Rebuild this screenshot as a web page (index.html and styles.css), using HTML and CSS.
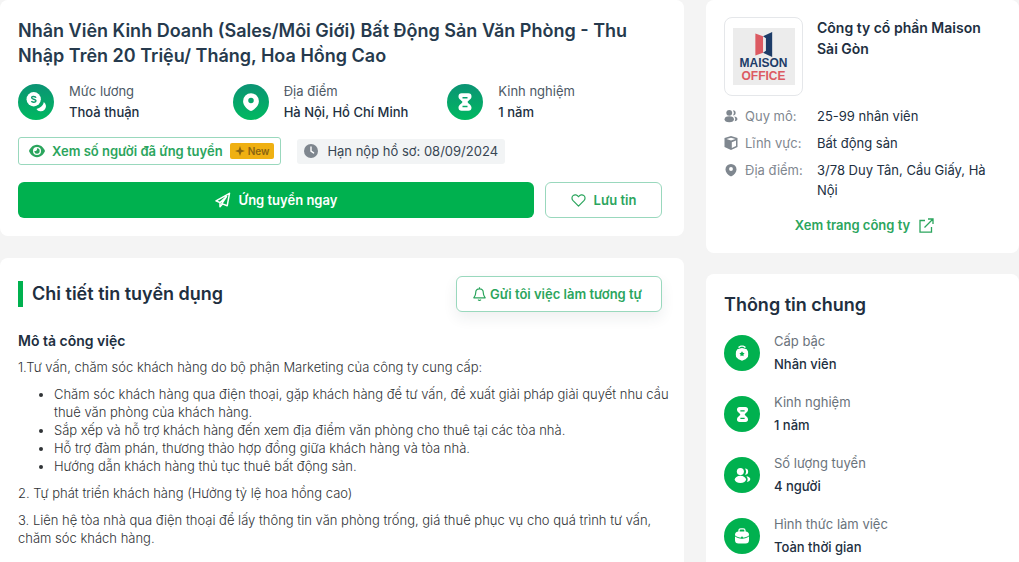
FILE: index.html
```html
<!DOCTYPE html>
<html lang="vi">
<head>
    <meta charset="UTF-8">
    <meta name="viewport" content="width=device-width, initial-scale=1.0">
    <title>Nhân Viên Kinh Doanh - Tuyển dụng</title>
    <link rel="stylesheet" href="styles.css">
</head>
<body>
    <!-- shared icons -->
    <svg class="sprite" aria-hidden="true">
        <symbol id="icon-hourglass" viewBox="0 0 24 24">
            <path fill-rule="evenodd" d="M8 1.500h8a3.800 3.800 0 0 1 3.800 3.800c0 3.200-3.300 4.200-4.800 6.700 1.500 2.500 4.800 3.500 4.800 6.700a3.800 3.800 0 0 1-3.800 3.800H8a3.800 3.800 0 0 1-3.800-3.800c0-3.200 3.300-4.200 4.800-6.700-1.500-2.500-4.800-3.500-4.800-6.700A3.800 3.800 0 0 1 8 1.500zM9 6v1.700h6V6zM9 16.500v1.700h6v-1.700z"/>
        </symbol>
        <symbol id="icon-pin" viewBox="0 0 24 24">
            <path fill-rule="evenodd" d="M12 1.500a9.500 9.500 0 0 0-9.500 9.500c0 5 4.500 9 7.800 11.200a3 3 0 0 0 3.400 0c3.300-2.200 7.800-6.200 7.800-11.200A9.500 9.500 0 0 0 12 1.500zm0 5.500a3.300 3.300 0 1 1 0 6.600A3.300 3.300 0 0 1 12 7z"/>
        </symbol>
        <symbol id="icon-users" viewBox="0 0 24 24">
            <circle cx="9" cy="6.500" r="5"/>
            <ellipse cx="9" cy="17.500" rx="8" ry="5"/>
            <path d="M15.500 2a4.500 4.500 0 0 1 0 9 8 8 0 0 0 0-9zM17.500 13c3 .3 5.500 1.800 5.500 4s-2 3.700-4.800 4c1.700-2.500 1.500-5.500-.7-8z"/>
        </symbol>
    </svg>

    <main class="page">
        <div class="column">
            <section class="card job">
                <h1>Nhân Viên Kinh Doanh (Sales/Môi Giới) Bất Động Sản Văn Phòng - Thu Nhập Trên 20 Triệu/ Tháng, Hoa Hồng Cao</h1>
                <div class="job-info">
                    <div class="info-item">
                        <span class="circle gradient">
                            <svg width="22" height="22" viewBox="0 0 24 24" fill="#fff">
                                <circle cx="9.500" cy="9" r="7.800"/>
                                <path d="M20.500 12a5.600 5.600 0 1 1-8 7.500c4-.9 7.500-3.500 8-7.500z"/>
                                <path d="M12 7.300C11.300 5.500 7.300 5.300 7.300 7.400c0 2.200 4.700 1 4.700 3.300 0 2-4.200 2-5 .4" fill="none" stroke="#0a9b6c" stroke-width="1.600"/>
                            </svg>
                        </span>
                        <div>
                            <div class="info-label">Mức lương</div>
                            <div class="info-value">Thoả thuận</div>
                        </div>
                    </div>
                    <div class="info-item">
                        <span class="circle gradient"><svg width="20" height="20" fill="#fff"><use href="#icon-pin"/></svg></span>
                        <div>
                            <div class="info-label">Địa điểm</div>
                            <div class="info-value">Hà Nội, Hồ Chí Minh</div>
                        </div>
                    </div>
                    <div class="info-item">
                        <span class="circle gradient"><svg width="20" height="20" fill="#fff"><use href="#icon-hourglass"/></svg></span>
                        <div>
                            <div class="info-label">Kinh nghiệm</div>
                            <div class="info-value">1 năm</div>
                        </div>
                    </div>
                </div>
                <div class="job-meta">
                    <button class="btn-outline btn-view" type="button">
                        <svg width="16" height="16" viewBox="0 0 576 512" fill="currentColor"><path fill-rule="evenodd" d="M288 32c-81 0-146 37-193 80C48 156 17 208 3 244c-3 8-3 17 0 24 14 36 45 88 92 132 47 43 112 80 193 80s146-37 193-80c47-44 78-96 92-132 3-7 3-16 0-24-14-36-45-88-92-132-47-43-112-80-193-80zM144 256a144 144 0 1 1 288 0 144 144 0 1 1-288 0zm144-64c0 35-29 64-64 64-7 0-14-1-20-3-6-2-13 2-12 8a96 96 0 1 0 101-101c-6 0-10 6-8 12 2 6 3 13 3 20z"/></svg>
                        <span>Xem số người đã ứng tuyển</span>
                        <span class="badge-new"><svg width="10" height="10" viewBox="0 0 10 10" fill="currentColor"><path d="M5 0l1.300 3.700L10 5 6.300 6.300 5 10 3.700 6.300 0 5l3.700-1.300z"/></svg>New</span>
                    </button>
                    <div class="deadline">
                        <svg width="14" height="14" viewBox="0 0 14 14"><circle cx="7" cy="7" r="7" fill="#7f878f"/><path d="M7 3v4.200l2.600 1.700" fill="none" stroke="#fff" stroke-width="1.400" stroke-linecap="round"/></svg>
                        <span>Hạn nộp hồ sơ: 08/09/2024</span>
                    </div>
                </div>
                <div class="job-actions">
                    <button class="btn-apply" type="button">
                        <svg width="16" height="16" viewBox="0 0 16 16" fill="none" stroke="currentColor" stroke-width="1.500" stroke-linejoin="round"><path d="M14.500 1.300L1 8.800l4 1.800 6.500-6-4.700 7 5.400 2.200zM5 10.600v4.200l2.500-2.700"/></svg>
                        Ứng tuyển ngay
                    </button>
                    <button class="btn-outline btn-save" type="button">
                        <svg width="15" height="15" viewBox="0 0 16 16" fill="none" stroke="currentColor" stroke-width="1.300" stroke-linejoin="round"><path d="M8 14L2.200 8.200C.6 6.500.7 4 2.200 2.800 4 1.300 6.400 1.800 8 4c1.600-2.200 4-2.700 5.800-1.200 1.500 1.200 1.600 3.700 0 5.400z"/></svg>
                        Lưu tin
                    </button>
                </div>
            </section>

            <section class="card card-last detail">
                <div class="detail-header">
                    <h2 class="marked">Chi tiết tin tuyển dụng</h2>
                    <button class="btn-outline btn-alert" type="button">
                        <svg width="13" height="14" viewBox="0 0 13 14" fill="none" stroke="currentColor" stroke-width="1.200" stroke-linejoin="round"><path d="M6.500 1.800c-2.500 0-3.800 1.800-3.800 3.900 0 2.800-.8 3.600-1.900 5.100h11.400c-1.100-1.500-1.900-2.300-1.900-5.100 0-2.100-1.300-3.900-3.800-3.900zM6.500.3v1.500M5 12.700c.8.800 2.200.8 3 0"/></svg>
                        Gửi tôi việc làm tương tự
                    </button>
                </div>
                <h3>Mô tả công việc</h3>
                <div class="description">
                    <p>1.Tư vấn, chăm sóc khách hàng do bộ phận Marketing của công ty cung cấp:</p>
                    <ul>
                        <li>Chăm sóc khách hàng qua điện thoại, gặp khách hàng để tư vấn, đề xuất giải pháp giải quyết nhu cầu thuê văn phòng của khách hàng.</li>
                        <li>Sắp xếp và hỗ trợ khách hàng đến xem địa điểm văn phòng cho thuê tại các tòa nhà.</li>
                        <li>Hỗ trợ đàm phán, thương thảo hợp đồng giữa khách hàng và tòa nhà.</li>
                        <li>Hướng dẫn khách hàng thủ tục thuê bất động sản.</li>
                    </ul>
                    <p>2. Tự phát triển khách hàng (Hưởng tỷ lệ hoa hồng cao)</p>
                    <p>3. Liên hệ tòa nhà qua điện thoại để lấy thông tin văn phòng trống, giá thuê phục vụ cho quá trình tư vấn, chăm sóc khách hàng.</p>
                </div>
            </section>
        </div>

        <aside class="column column-side">
            <section class="card company">
                <div class="company-header">
                    <div class="company-logo">
                        <div class="logo-inner">
                            <svg width="18" height="25" viewBox="0 0 18 26"><path d="M0 1.500L8 4.500v17L0 24.500z" fill="#dc5a62"/><path d="M8 4.500L17.500 0v26L8 21.500l3-2V6.500z" fill="#1d3c68"/></svg>
                            <span class="logo-top">MAISON</span>
                            <span class="logo-bottom">OFFICE</span>
                        </div>
                    </div>
                    <h2 class="company-name">Công ty cổ phần Maison Sài Gòn</h2>
                </div>
                <dl class="company-facts">
                    <dt><svg width="14" height="14" fill="#7f878f"><use href="#icon-users"/></svg>Quy mô:</dt>
                    <dd>25-99 nhân viên</dd>
                    <dt><svg width="14" height="14" viewBox="0 0 14 14"><path d="M7 0l6.500 2v9L7 14 .5 11V2z" fill="#7f878f"/><path d="M2.500 3L7 4.600 11.500 3 7 1.700zM7.800 6.200l4.200-1.700v5.500l-4.200 2z" fill="#fff"/></svg>Lĩnh vực:</dt>
                    <dd>Bất động sản</dd>
                    <dt><svg width="14" height="14" fill="#7f878f"><use href="#icon-pin"/></svg>Địa điểm:</dt>
                    <dd>3/78 Duy Tân, Cầu Giấy, Hà Nội</dd>
                </dl>
                <a class="company-link" href="#">
                    Xem trang công ty
                    <svg width="15" height="15" viewBox="0 0 15 15" fill="none" stroke="currentColor" stroke-width="1.300"><path d="M6 2.500H1v11.700h11.500V9M5.500 9.500L14 1M9 1h5v5"/></svg>
                </a>
            </section>

            <section class="card card-last general">
                <h2>Thông tin chung</h2>
                <div class="general-list">
                    <div class="info-item">
                        <span class="circle">
                            <svg width="16" height="16" viewBox="0 0 16 16" fill="#fff"><path d="M4 2.200C5.500-.2 10.500-.2 12 2.200l-1.200.8C9.500 1.300 6.500 1.300 5.200 3z"/><path fill-rule="evenodd" d="M8 3l2.200.5 2.500.8 1.300 2.200.2 2.800-.3 2.600-2.400 2.300L8 15.800l-3.500-1.600-2.400-2.300-.3-2.600L2 6.500l1.300-2.200 2.500-.8zM8 6.300l-.9 1.500-1.700.4 1.200 1.300-.2 1.700L8 10.500l1.600.7-.2-1.700 1.200-1.300-1.700-.4z"/></svg>
                        </span>
                        <div>
                            <div class="info-label">Cấp bậc</div>
                            <div class="info-value">Nhân viên</div>
                        </div>
                    </div>
                    <div class="info-item">
                        <span class="circle"><svg width="17" height="17" fill="#fff"><use href="#icon-hourglass"/></svg></span>
                        <div>
                            <div class="info-label">Kinh nghiệm</div>
                            <div class="info-value">1 năm</div>
                        </div>
                    </div>
                    <div class="info-item">
                        <span class="circle"><svg width="17" height="17" fill="#fff"><use href="#icon-users"/></svg></span>
                        <div>
                            <div class="info-label">Số lượng tuyển</div>
                            <div class="info-value">4 người</div>
                        </div>
                    </div>
                    <div class="info-item">
                        <span class="circle">
                            <svg width="16" height="16" viewBox="0 0 16 16"><rect x="1" y="3.500" width="14" height="12" rx="3.500" fill="#fff"/><path d="M5 4V2.500A1.700 1.700 0 0 1 6.700.8h2.600A1.700 1.700 0 0 1 11 2.500V4" fill="none" stroke="#fff" stroke-width="1.300"/><path d="M.5 7.500c4 3.600 11 3.600 15 0" fill="none" stroke="#00b14f"/><circle cx="8" cy="9.500" r="1" fill="#00b14f"/></svg>
                        </span>
                        <div>
                            <div class="info-label">Hình thức làm việc</div>
                            <div class="info-value">Toàn thời gian</div>
                        </div>
                    </div>
                </div>
            </section>
        </aside>
    </main>
</body>
</html>
```
FILE: styles.css
```css
* {
    box-sizing: border-box;
}
body {
    margin: 0;
    background-color: #f4f4f4;
    color: #263a4d;
    font-family: Inter, sans-serif;
    font-size: 13px;
    line-height: 18px;
}
h1, h2, h3, p, ul, dl, dd {
    margin: 0;
}
h1, h2, h3 {
    font-weight: 600;
}
h1 {
    font-size: 18px;
    line-height: 25px;
}
h2 {
    font-size: 18px;
    line-height: 26px;
    color: #212f3f;
}
h3 {
    font-size: 14px;
    line-height: 20px;
    color: #212f3f;
}
button {
    display: flex;
    align-items: center;
    justify-content: center;
    font-family: inherit;
    font-size: 13px;
    font-weight: 600;
    cursor: pointer;
}
svg {
    flex-shrink: 0;
}
.sprite {
    display: none;
}
.page {
    display: grid;
    grid-template-columns: minmax(0, 1fr) 313px;
    gap: 22px;
    min-height: 100vh;
}
.column {
    display: flex;
    flex-direction: column;
    gap: 22px;
}
.column-side {
    gap: 21px;
}
.card {
    background-color: #ffffff;
    border-radius: 8px;
    padding: 18px;
}
.card-last {
    flex: 1;
    border-radius: 8px 8px 0 0;
    padding-bottom: 0;
}

/* job header */
.job {
    padding-right: 22px;
}
.job-info {
    display: grid;
    grid-template-columns: repeat(3, 1fr);
    margin-top: 13px;
}
.info-item {
    display: flex;
    align-items: center;
    gap: 15px;
    line-height: 21px;
}
.info-label {
    color: #4d5965;
}
.info-value {
    font-weight: 500;
    color: #212f3f;
}
.circle {
    display: flex;
    align-items: center;
    justify-content: center;
    flex-shrink: 0;
    width: 36px;
    height: 36px;
    border-radius: 50%;
    background-color: #00b14f;
}
.gradient {
    background: linear-gradient(#0b9374, #00b960);
}
.job-meta {
    display: flex;
    align-items: center;
    gap: 16px;
    margin-top: 14px;
}
.btn-outline {
    background-color: #ffffff;
    border: 1px solid #99d8bd;
    border-radius: 6px;
    color: #2ba55d;
}
.btn-view {
    gap: 7px;
    height: 28px;
    padding: 0 6px 0 10px;
    border-radius: 3px;
}
.badge-new {
    display: flex;
    align-items: center;
    gap: 3px;
    height: 16px;
    padding: 0 5px;
    border-radius: 2px;
    background-color: #efb012;
    color: #8a6410;
    font-size: 10px;
}
.deadline {
    display: flex;
    align-items: center;
    gap: 9px;
    height: 25px;
    padding: 0 7px;
    border-radius: 3px;
    background-color: #f2f4f5;
    color: #384653;
}
.job-actions {
    display: flex;
    gap: 11px;
    margin-top: 17px;
}
.job-actions button {
    gap: 8px;
    height: 36px;
    border-radius: 6px;
}
.btn-apply {
    flex: 1;
    border: 0;
    background-color: #00b14f;
    color: #ffffff;
}
.btn-save {
    width: 117px;
}

/* job detail */
.detail {
    padding-right: 8px;
}
.detail-header {
    display: flex;
    align-items: center;
    justify-content: space-between;
    padding-right: 14px;
}
.marked {
    border-left: 5px solid #00b14f;
    padding-left: 9px;
}
.btn-alert {
    gap: 4px;
    height: 36px;
    padding: 0 19px 0 16px;
    box-shadow: 0 6px 14px rgba(33, 47, 63, 0.08);
}
.detail h3 {
    margin-top: 19px;
}
.description {
    margin-top: 7px;
    color: #303336;
    font-weight: 300;
}
.description p {
    margin-bottom: 9px;
}
.description ul {
    margin-bottom: 9px;
    padding-left: 36px;
}

/* company */
.company {
    padding: 17px 14px 18px 18px;
}
.company-header {
    display: flex;
    gap: 14px;
    padding-right: 8px;
}
.company-logo {
    display: flex;
    align-items: center;
    justify-content: center;
    flex-shrink: 0;
    width: 79px;
    height: 79px;
    border: 1px solid #e5e7ea;
    border-radius: 8px;
}
.logo-inner {
    display: flex;
    flex-direction: column;
    align-items: center;
    width: 62px;
    padding: 4px 0 2px;
    background-color: #ececec;
    font-family: "Liberation Sans", sans-serif;
    font-size: 12px;
    font-weight: 700;
    line-height: 13px;
}
.logo-top {
    color: #1d3c68;
}
.logo-bottom {
    color: #dc5a62;
}
.company-name {
    font-size: 14px;
    font-weight: 600;
    line-height: 21px;
}
.company-facts {
    display: grid;
    grid-template-columns: 79px 1fr;
    gap: 7px 14px;
    margin-top: 10px;
    line-height: 20px;
}
.company-facts dt {
    display: flex;
    align-items: center;
    align-self: start;
    gap: 7px;
    color: #7f878f;
    white-space: nowrap;
}
.company-facts dd {
    color: #212f3f;
}
.company-link {
    display: flex;
    align-items: center;
    justify-content: center;
    gap: 9px;
    margin-top: 15px;
    color: #2ba55d;
    font-weight: 600;
    line-height: 20px;
    text-decoration: none;
}

/* general information */
.general-list {
    display: flex;
    flex-direction: column;
    gap: 15px;
    margin-top: 12px;
}
.general .info-item {
    gap: 14px;
    line-height: 23px;
}
.general .info-label {
    color: #6a737c;
}
```
